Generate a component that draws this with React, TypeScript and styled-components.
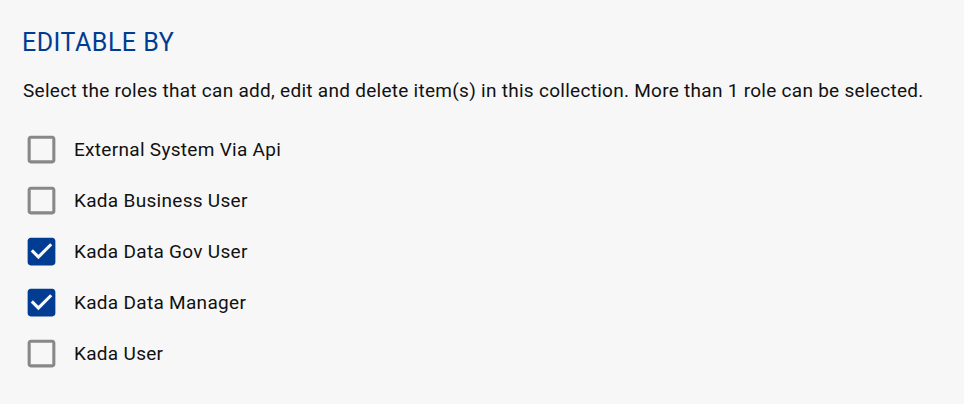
import React from "react";
import styled, { createGlobalStyle } from "styled-components";

const GlobalStyle = createGlobalStyle`
  html, body { margin: 0; padding: 0; background: #f7f7f7; }
  body { font-family: Roboto, "Noto Sans", Arial, sans-serif; }
`;

const Panel = styled.section`
  box-sizing: border-box;
  width: 964px;
  min-height: 404px;
  padding: 28px 23px 0;
  background: #f7f7f7;
  color: rgba(0, 0, 0, 0.87);
`;

const Title = styled.h2`
  margin: 0 0 21px -1px;
  font-size: 25px;
  line-height: 30px;
  font-weight: 400;
  letter-spacing: 0.5px;
  color: #003d92;
`;

const Description = styled.p`
  margin: 0 0 21px;
  font-size: 19px;
  line-height: 24px;
  letter-spacing: 0.28px;
  color: #111;
`;

const List = styled.div`
  display: flex;
  flex-direction: column;
`;

const Row = styled.label`
  display: flex;
  align-items: center;
  height: 51px;
  cursor: pointer;
`;

const Box = styled.svg<{ $checked: boolean }>`
  width: 37px;
  height: 37px;
  flex: none;
  fill: ${(p) => (p.$checked ? "#003d92" : "#888888")};
`;

const Label = styled.span`
  margin-left: 14px;
  font-size: 19px;
  line-height: 24px;
  letter-spacing: 0.3px;
  color: #111;
`;

const CheckIcon: React.FC<{ checked: boolean }> = ({ checked }) => (
  <Box $checked={checked} viewBox="0 0 24 24" aria-hidden="true">
    {checked ? (
      <path d="M19 3H5c-1.11 0-2 .9-2 2v14c0 1.1.89 2 2 2h14c1.11 0 2-.9 2-2V5c0-1.1-.89-2-2-2zm-9 14l-5-5 1.41-1.41L10 14.17l7.59-7.59L19 8l-9 9z" />
    ) : (
      <path d="M19 5v14H5V5h14m0-2H5c-1.11 0-2 .9-2 2v14c0 1.1.89 2 2 2h14c1.11 0 2-.9 2-2V5c0-1.1-.89-2-2-2z" />
    )}
  </Box>
);

const roles = [
  { name: "External System Via Api", checked: false },
  { name: "Kada Business User", checked: false },
  { name: "Kada Data Gov User", checked: true },
  { name: "Kada Data Manager", checked: true },
  { name: "Kada User", checked: false },
];

export default function App() {
  return (
    <>
      <GlobalStyle />
      <Panel>
        <Title>EDITABLE BY</Title>
        <Description>
          Select the roles that can add, edit and delete item(s) in this collection. More than 1 role can be selected.
        </Description>
        <List>
          {roles.map((r) => (
            <Row key={r.name}>
              <CheckIcon checked={r.checked} />
              <Label>{r.name}</Label>
            </Row>
          ))}
        </List>
      </Panel>
    </>
  );
}
